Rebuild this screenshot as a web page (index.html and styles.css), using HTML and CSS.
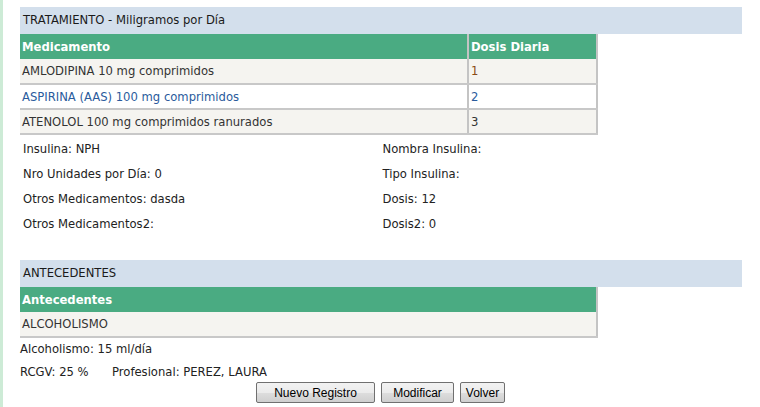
FILE: index.html
```html
<!DOCTYPE html>
<html>
<head>
<meta charset="utf-8">
<link rel="stylesheet" href="styles.css">
</head>
<body>
<div class="page">
  <div class="section">
    <div class="sec-title">TRATAMIENTO - Miligramos por Día</div>
    <table class="grid">
      <thead>
        <tr><th class="c1">Medicamento</th><th class="c2">Dosis Diaria</th></tr>
      </thead>
      <tbody>
        <tr class="odd"><td>AMLODIPINA 10 mg comprimidos</td><td class="n1">1</td></tr>
        <tr class="even blue"><td>ASPIRINA (AAS) 100 mg comprimidos</td><td>2</td></tr>
        <tr class="odd"><td>ATENOLOL 100 mg comprimidos ranurados</td><td>3</td></tr>
      </tbody>
    </table>
    <div class="info">
      <div class="col">
        <div class="line">Insulina: NPH</div>
        <div class="line">Nro Unidades por Día: 0</div>
        <div class="line">Otros Medicamentos: dasda</div>
        <div class="line">Otros Medicamentos2:</div>
      </div>
      <div class="col">
        <div class="line">Nombra Insulina:</div>
        <div class="line">Tipo Insulina:</div>
        <div class="line">Dosis: 12</div>
        <div class="line">Dosis2: 0</div>
      </div>
    </div>
  </div>
  <div class="section sec2">
    <div class="sec-title">ANTECEDENTES</div>
    <table class="grid">
      <thead>
        <tr><th>Antecedentes</th></tr>
      </thead>
      <tbody>
        <tr class="odd"><td>ALCOHOLISMO</td></tr>
      </tbody>
    </table>
    <div class="foot-line">Alcoholismo: 15 ml/día</div>
    <div class="foot-line"><span class="rcgv">RCGV: 25 %</span><span>Profesional: PEREZ, LAURA</span></div>
    <div class="buttons">
      <button class="btn b1">Nuevo Registro</button>
      <button class="btn b2">Modificar</button>
      <button class="btn b3">Volver</button>
    </div>
  </div>
</div>
</body>
</html>
```
FILE: styles.css
```css
html, body {
  margin: 0;
  padding: 0;
  background: #ffffff;
}
body {
  font-family: "DejaVu Sans", sans-serif;
  font-size: 11.6px;
  color: #222;
  height: 407px;
  overflow: hidden;
  border-left: 3px solid #cdebd6;
}
.page {
  padding: 7px 0 0 17px;
  width: 722px;
}
.sec-title {
  background: #d3dfec;
  height: 27px;
  line-height: 27px;
  padding-left: 3px;
  color: #1a1a1a;
}
.grid {
  border-collapse: collapse;
  width: 578px;
  border-right: 2px solid #c4c4c4;
}
.grid th {
  background: #4aab82;
  color: #ffffff;
  font-weight: bold;
  text-align: left;
  height: 25px;
  padding: 0 0 0 2px;
  box-sizing: border-box;
}
.grid th.c2 {
  border-left: 2px solid #c4c4c4;
}
.grid td {
  height: 25px;
  padding: 0 0 0 2px;
  border-bottom: 2px solid #c8c8c8;
  box-sizing: border-box;
  color: #333;
}
.grid td + td {
  border-left: 2px solid #c4c4c4;
  width: 129px;
}
.grid tr.odd td { background: #f5f4f0; }
.grid tr.even td { background: #ffffff; }
.grid tr.blue td { color: #2a5b9c; }
.grid td.n1 { color: #8a4a14; }
.info {
  display: flex;
  padding: 2px 0 0 3px;
  height: 123px;
}
.col {
  width: 360px;
}
.line {
  height: 25px;
  line-height: 25px;
}
.foot-line {
  height: 23px;
  line-height: 23px;
}
.rcgv {
  display: inline-block;
  width: 92px;
}
.buttons {
  display: flex;
  gap: 6px;
  padding-left: 236px;
  margin-top: -2px;
}
.btn {
  font-family: "Liberation Sans", Arial, sans-serif;
  font-size: 12px;
  height: 21px;
  padding: 0 8px;
  border: 1px solid #707070;
  border-radius: 2px;
  background: linear-gradient(#f2f2f2, #ebebeb 50%, #dddddd 51%, #cfcfcf);
  color: #000;
}
.b1 { width: 119px; }
.b2 { width: 73px; }
.b3 { width: 45px; padding: 0; }
```
